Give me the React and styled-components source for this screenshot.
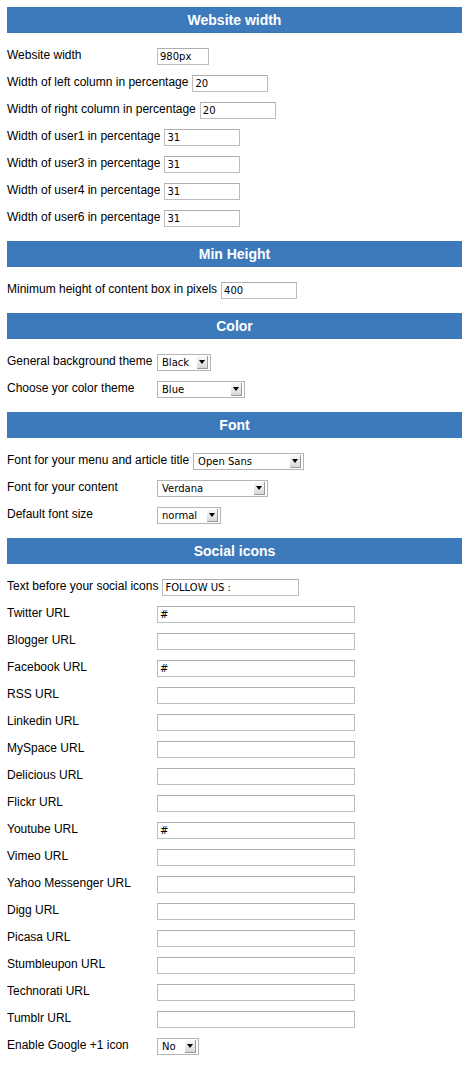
import styled, { createGlobalStyle } from "styled-components";

const Global = createGlobalStyle`
    body {
        margin: 0;
        background: #fff;
        font-family: "Liberation Sans", Arial, sans-serif;
        color: #000;
    }
`

const Page = styled.div`
    width: 455px;
    padding: 7px 0 0 7px;
`

const Header = styled.div`
    height: 26px;
    background: #3d7abb;
    color: #fff;
    font-size: 14px;
    font-weight: bold;
    display: flex;
    align-items: center;
    justify-content: center;
`

const Body = styled.div`
    padding: 10px 0 9px;
    display: flex;
    flex-direction: column;
`

const Row = styled.div`
    height: 27px;
    display: flex;
    align-items: center;
    gap: 4px;
`

const Label = styled.span`
    min-width: 146px;
    font-size: 12px;
    margin-top: -3px;
    white-space: nowrap;
`

const Input = styled.div`
    box-sizing: border-box;
    width: ${p => p.w}px;
    height: 17px;
    border: 1px solid #bdbdbd;
    border-top-color: #adadad;
    background: #fff;
    font-family: "DejaVu Sans", Verdana, sans-serif;
    font-size: 10px;
    line-height: 15px;
    padding-left: 2px;
    overflow: hidden;
    white-space: nowrap;
`

const Select = styled.div`
    box-sizing: border-box;
    width: ${p => p.w}px;
    height: 17px;
    border: 1px solid #b5b5b5;
    background: #fff;
    display: flex;
    align-items: center;
    justify-content: space-between;
    font-family: "DejaVu Sans", Verdana, sans-serif;
    font-size: 10px;
    padding: 0 2px 0 4px;
`

const Arrow = styled.span`
    width: 10px;
    height: 12px;
    background: linear-gradient(#fafafa, #d8d8d8);
    border-right: 1px solid #9a9a9a;
    border-bottom: 1px solid #9a9a9a;
    display: flex;
    align-items: center;
    justify-content: center;
    &::after {
        content: "";
        border-left: 3px solid transparent;
        border-right: 3px solid transparent;
        border-top: 4px solid #000;
    }
`

const Field = ({ label, value = "", w, select }) => (
    <Row>
        <Label>{label}</Label>
        {select ? (
            <Select w={w}>{value}<Arrow /></Select>
        ) : (
            <Input w={w}>{value}</Input>
        )}
    </Row>
)

const sections = [
    {
        title: "Website width",
        fields: [
            { label: "Website width", value: "980px", w: 52 },
            { label: "Width of left column in percentage", value: "20", w: 76 },
            { label: "Width of right column in percentage", value: "20", w: 76 },
            { label: "Width of user1 in percentage", value: "31", w: 76 },
            { label: "Width of user3 in percentage", value: "31", w: 76 },
            { label: "Width of user4 in percentage", value: "31", w: 76 },
            { label: "Width of user6 in percentage", value: "31", w: 76 },
        ],
    },
    {
        title: "Min Height",
        fields: [{ label: "Minimum height of content box in pixels", value: "400", w: 76 }],
    },
    {
        title: "Color",
        fields: [
            { label: "General background theme", value: "Black", w: 54, select: true },
            { label: "Choose yor color theme", value: "Blue", w: 88, select: true },
        ],
    },
    {
        title: "Font",
        fields: [
            { label: "Font for your menu and article title", value: "Open Sans", w: 111, select: true },
            { label: "Font for your content", value: "Verdana", w: 111, select: true },
            { label: "Default font size", value: "normal", w: 64, select: true },
        ],
    },
    {
        title: "Social icons",
        fields: [
            { label: "Text before your social icons", value: "FOLLOW US :", w: 137 },
            { label: "Twitter URL", value: "#", w: 198 },
            { label: "Blogger URL", w: 198 },
            { label: "Facebook URL", value: "#", w: 198 },
            { label: "RSS URL", w: 198 },
            { label: "Linkedin URL", w: 198 },
            { label: "MySpace URL", w: 198 },
            { label: "Delicious URL", w: 198 },
            { label: "Flickr URL", w: 198 },
            { label: "Youtube URL", value: "#", w: 198 },
            { label: "Vimeo URL", w: 198 },
            { label: "Yahoo Messenger URL", w: 198 },
            { label: "Digg URL", w: 198 },
            { label: "Picasa URL", w: 198 },
            { label: "Stumbleupon URL", w: 198 },
            { label: "Technorati URL", w: 198 },
            { label: "Tumblr URL", w: 198 },
            { label: "Enable Google +1 icon", value: "No", w: 42, select: true },
        ],
    },
]

const App = () => (
    <Page>
        <Global />
        {sections.map(s => (
            <div key={s.title}>
                <Header>{s.title}</Header>
                <Body>
                    {s.fields.map(f => <Field key={f.label} {...f} />)}
                </Body>
            </div>
        ))}
    </Page>
)

export default App;
